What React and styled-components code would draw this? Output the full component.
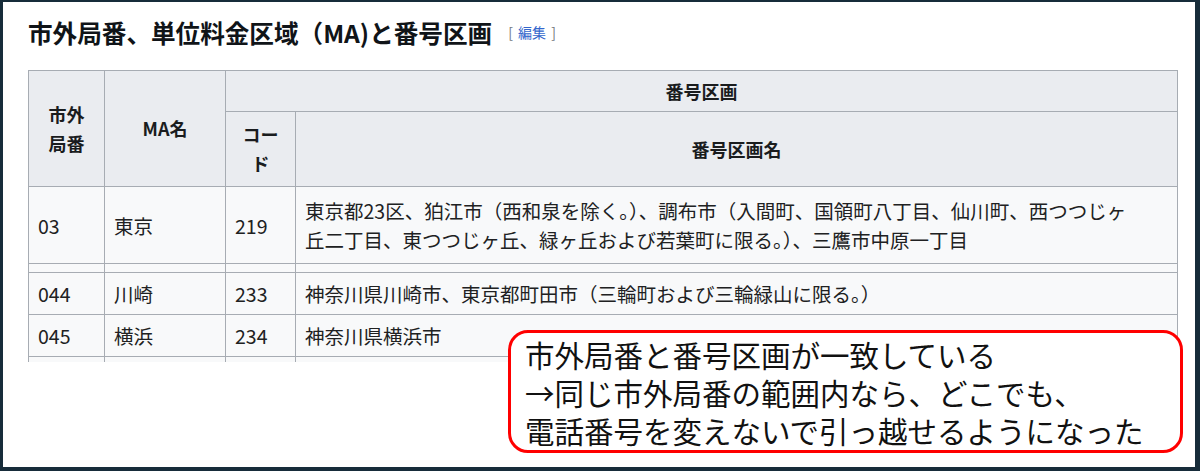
import React from 'react';
import styled, { createGlobalStyle } from 'styled-components';

const GlobalStyle = createGlobalStyle`
  html, body {
    margin: 0;
    padding: 0;
    background: #fff;
  }
`;

const Frame = styled.div`
  position: relative;
  box-sizing: border-box;
  width: 1200px;
  height: 471px;
  overflow: hidden;
  background: #fff;
  border-style: solid;
  border-color: #172c3a;
  border-width: 2px 5px 4px 3px;
  padding: 15px 0 0 25px;
  font-family: "Noto Sans CJK JP", "Noto Sans", sans-serif;
  color: #202122;
`;

const Heading = styled.div`
  display: flex;
  align-items: center;
  height: 30px;
  margin-bottom: 23px;
`;

const Title = styled.h2`
  margin: 0;
  font-size: 24.6px;
  line-height: 30px;
  font-weight: 700;
  color: #101418;
`;

const EditLink = styled.span`
  margin-left: 16px;
  font-size: 14px;
  color: #72777d;
  word-spacing: 2px;

  a {
    color: #3366cc;
    text-decoration: none;
  }
`;

const TableClip = styled.div`
  width: 1150px;
  height: 292px;
  overflow: hidden;
`;

const Table = styled.table`
  width: 1150px;
  table-layout: fixed;
  border-collapse: collapse;
  font-size: 19.5px;
  line-height: 29px;
`;

const HeadCell = styled.th`
  background: #eaecf0;
  border: 1.5px solid #a7acb3;
  font-weight: 700;
  font-size: 18px;
  line-height: 29px;
  text-align: center;
  vertical-align: middle;
  padding: 0 8px;
  color: #1a1c1e;
`;

const Row = styled.tr`
  height: ${(p) => p.$h}px;
`;

const Cell = styled.td`
  background: #f8f9fa;
  border: 1.5px solid #a7acb3;
  padding: 0 9px;
  vertical-align: middle;
  color: #202122;
`;

const Callout = styled.div`
  position: absolute;
  left: 505px;
  top: 328px;
  box-sizing: border-box;
  width: 675px;
  height: 123px;
  border: 3px solid #ff0000;
  border-radius: 20px;
  background: #fff;
  padding: 2px 0 0 14px;
  font-size: 29.5px;
  line-height: 38px;
  color: #111;
  white-space: nowrap;
`;

const rows = [
  { code: '044', ma: '川崎', num: '233', area: '神奈川県川崎市、東京都町田市（三輪町および三輪緑山に限る。）' },
  { code: '045', ma: '横浜', num: '234', area: '神奈川県横浜市' },
];

export default function App() {
  return (
    <>
      <GlobalStyle />
      <Frame>
        <Heading>
          <Title>市外局番、単位料金区域（MA)と番号区画</Title>
          <EditLink>[ <a href="#">編集</a> ]</EditLink>
        </Heading>

        <TableClip>
          <Table>
            <colgroup>
              <col style={{ width: 76 }} />
              <col style={{ width: 121 }} />
              <col style={{ width: 70 }} />
              <col />
            </colgroup>
            <thead>
              <Row $h={41}>
                <HeadCell rowSpan={2}>市外<br />局番</HeadCell>
                <HeadCell rowSpan={2}>MA名</HeadCell>
                <HeadCell colSpan={2}>番号区画</HeadCell>
              </Row>
              <Row $h={75}>
                <HeadCell>コー<br />ド</HeadCell>
                <HeadCell>番号区画名</HeadCell>
              </Row>
            </thead>
            <tbody>
              <Row $h={77}>
                <Cell>03</Cell>
                <Cell>東京</Cell>
                <Cell>219</Cell>
                <Cell>
                  東京都23区、狛江市（西和泉を除く。）、調布市（入間町、国領町八丁目、仙川町、西つつじヶ<br />
                  丘二丁目、東つつじヶ丘、緑ヶ丘および若葉町に限る。）、三鷹市中原一丁目
                </Cell>
              </Row>
              <Row $h={9}>
                <Cell />
                <Cell />
                <Cell />
                <Cell />
              </Row>
              {rows.map((r) => (
                <Row $h={42} key={r.code}>
                  <Cell>{r.code}</Cell>
                  <Cell>{r.ma}</Cell>
                  <Cell>{r.num}</Cell>
                  <Cell>{r.area}</Cell>
                </Row>
              ))}
              <Row $h={42}>
                <Cell />
                <Cell />
                <Cell />
                <Cell />
              </Row>
            </tbody>
          </Table>
        </TableClip>

        <Callout>
          市外局番と番号区画が一致している<br />
          →同じ市外局番の範囲内なら、どこでも、<br />
          電話番号を変えないで引っ越せるようになった
        </Callout>
      </Frame>
    </>
  );
}
